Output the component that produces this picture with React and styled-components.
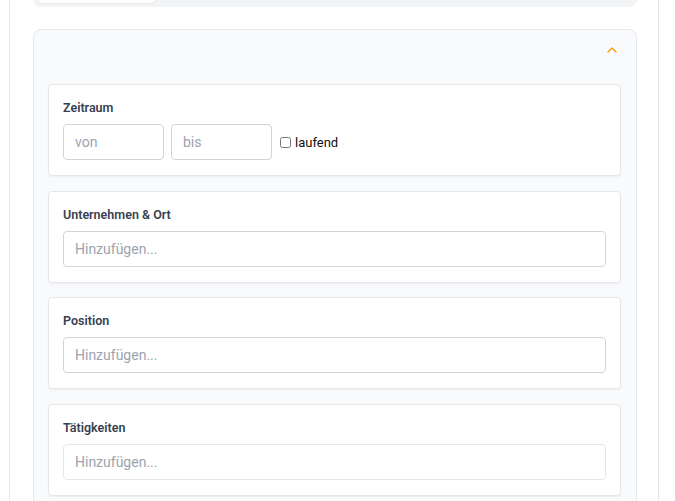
import React from 'react'
import styled, { createGlobalStyle } from 'styled-components'
import { ChevronUp } from 'lucide-react'

const GlobalStyle = createGlobalStyle`
  html, body {
    margin: 0;
    padding: 0;
    background: #ffffff;
    font-family: Roboto, "Liberation Sans", Arial, sans-serif;
    overflow: hidden;
  }
  * {
    box-sizing: border-box;
  }
`

const Page = styled.div`
  margin-left: 9px;
  width: 650px;
  height: 501px;
  background: #ffffff;
  border-left: 1px solid #e5e7eb;
  border-right: 1px solid #e5e7eb;
  padding: 0 21px 0 23px;
  display: flex;
  flex-direction: column;
  gap: 22px;
  & > * {
    flex-shrink: 0;
  }
`

const TabBar = styled.div`
  margin-top: -30px;
  height: 37px;
  background: #f3f4f6;
  border-radius: 8px;
  padding: 4px;
  display: flex;
`

const Tab = styled.div`
  width: 119px;
  background: #ffffff;
  border-radius: 6px;
  box-shadow: 0 1px 2px rgba(0, 0, 0, 0.06);
`

const Accordion = styled.section`
  background: #f9fafb;
  border: 1px solid #e5e7eb;
  border-radius: 8px;
`

const AccordionHeader = styled.div`
  display: flex;
  justify-content: flex-end;
  align-items: center;
  padding: 12px 16px 13px;
  color: #f59e0b;
`

const AccordionBody = styled.div`
  display: flex;
  flex-direction: column;
  gap: 14.5px;
  padding: 13px 15px 16px 14px;
`

const Card = styled.div`
  background: #ffffff;
  border: 1px solid #e5e7eb;
  border-radius: 4px;
  box-shadow: 0 1px 2px rgba(0, 0, 0, 0.05);
  padding: 15px 14px 15px;
  display: flex;
  flex-direction: column;
  gap: 8px;
`

const Label = styled.label`
  font-size: 12.5px;
  font-weight: 600;
  color: #374151;
  line-height: 16px;
`

const Row = styled.div`
  display: flex;
  align-items: center;
  gap: 7px;
`

const Input = styled.input`
  height: 36px;
  width: ${(p) => p.$width || '100%'};
  border: 1px solid ${(p) => (p.$soft ? '#e5e7eb' : '#d1d5db')};
  border-radius: 4px;
  padding: 0 11px;
  font-family: inherit;
  font-size: 14px;
  color: #111827;
  background: #ffffff;
  outline: none;
  &::placeholder {
    color: #9ca3af;
  }
`

const CheckLabel = styled.label`
  display: flex;
  align-items: center;
  gap: 4px;
  font-size: 13px;
  font-weight: 400;
  color: #111111;
  input {
    margin: 0 0 0 1px;
    width: 11px;
    height: 11px;
  }
`

const fields = [
  { label: 'Unternehmen & Ort' },
  { label: 'Position' },
  { label: 'Tätigkeiten', soft: true },
]

export default function App() {
  return (
    <>
      <GlobalStyle />
      <Page>
        <TabBar>
          <Tab />
        </TabBar>
        <Accordion>
          <AccordionHeader>
            <ChevronUp size={16} strokeWidth={2} />
          </AccordionHeader>
          <AccordionBody>
            <Card>
              <Label>Zeitraum</Label>
              <Row>
                <Input $width="101px" placeholder="von" />
                <Input $width="101px" placeholder="bis" />
                <CheckLabel>
                  <input type="checkbox" />
                  laufend
                </CheckLabel>
              </Row>
            </Card>
            {fields.map((f) => (
              <Card key={f.label}>
                <Label>{f.label}</Label>
                <Input $soft={f.soft} placeholder="Hinzufügen..." />
              </Card>
            ))}
          </AccordionBody>
        </Accordion>
      </Page>
    </>
  )
}
